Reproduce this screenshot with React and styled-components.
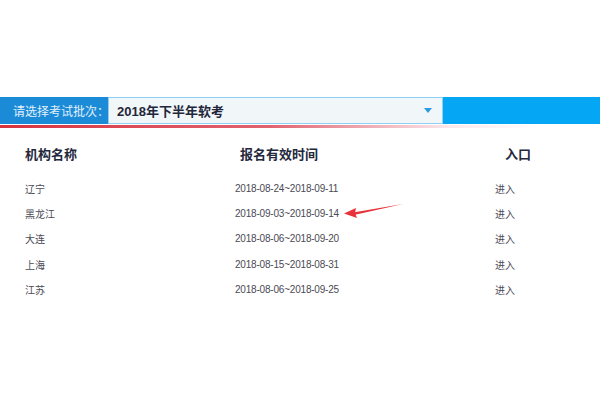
import React from 'react';
import styled, { createGlobalStyle } from 'styled-components';

const GlobalStyle = createGlobalStyle`
	html, body {
		margin: 0;
		padding: 0;
		background: #fff;
	}
	body {
		font-family: "Liberation Sans", "Noto Sans CJK SC", sans-serif;
	}
`;

const rows = [
	{ name: '辽宁', time: '2018-08-24~2018-09-11' },
	{ name: '黑龙江', time: '2018-09-03~2018-09-14', marked: true },
	{ name: '大连', time: '2018-08-06~2018-09-20' },
	{ name: '上海', time: '2018-08-15~2018-08-31' },
	{ name: '江苏', time: '2018-08-06~2018-09-25' },
];

export const App = () => (
	<Page>
		<GlobalStyle />
		<BarWrap>
			<Bar>
				<Label>请选择考试批次：</Label>
				<Select>
					<SelectText>2018年下半年软考</SelectText>
					<Caret viewBox="0 0 8 5">
						<path d="M0 0 L8 0 L4 5 Z" fill="#2d9be2" />
					</Caret>
				</Select>
				<BarFill />
			</Bar>
			<RedLine />
		</BarWrap>
		<Table>
			<Head $indent={0}>机构名称</Head>
			<Head $indent={5}>报名有效时间</Head>
			<Head $indent={10}>入口</Head>
			{rows.map(r => (
				<React.Fragment key={r.name}>
					<Cell>{r.name}</Cell>
					<Cell $date>
						{r.time}
						{r.marked && (
							<Arrow viewBox="0 0 62 16">
								<path d="M60 1 L10 9.5 L11 12 Z" fill="#e8323a" />
								<path d="M1 10.5 L13 5 L12 10 L14 15 Z" fill="#e8323a" />
							</Arrow>
						)}
					</Cell>
					<Cell>进入</Cell>
				</React.Fragment>
			))}
		</Table>
	</Page>
);

export default App;

const Page = styled.div`
	width: 600px;
	height: 400px;
	padding-top: 97px;
	box-sizing: border-box;
	overflow: hidden;
`;

const BarWrap = styled.div`
	display: flex;
	flex-direction: column;
`;

const Bar = styled.div`
	display: flex;
	align-items: stretch;
	height: 27px;
	background: #1b8bd7;
`;

const Label = styled.div`
	display: flex;
	align-items: center;
	width: 108px;
	padding-left: 13px;
	box-sizing: border-box;
	color: #e2f0fb;
	font-size: 12px;
	white-space: nowrap;
`;

const Select = styled.div`
	display: flex;
	align-items: center;
	justify-content: space-between;
	width: 335px;
	padding: 0 10px 0 8px;
	box-sizing: border-box;
	background: #f1f6f9;
	border: 1px solid #8fd0f2;
`;

const SelectText = styled.span`
	font-size: 13px;
	font-weight: bold;
	color: #23263a;
`;

const Caret = styled.svg`
	width: 8px;
	height: 5px;
`;

const BarFill = styled.div`
	flex: 1;
	background: #05a6f3;
`;

const RedLine = styled.div`
	height: 3px;
	margin-top: 1px;
	background: linear-gradient(to right, #d8343f 0%, #e06470 45%, rgba(240, 180, 190, 0.3) 75%, rgba(255, 255, 255, 0) 90%);
`;

const Table = styled.div`
	display: grid;
	grid-template-columns: 210px 260px 1fr;
	grid-template-rows: 45px;
	grid-auto-rows: 25.2px;
	padding: 3px 0 0 25px;
	align-items: center;
`;

const Head = styled.div`
	padding-left: ${p => p.$indent}px;
	font-size: 13px;
	font-weight: bold;
	color: #24283c;
	white-space: nowrap;
`;

const Cell = styled.div`
	position: relative;
	font-size: 10px;
	letter-spacing: ${p => (p.$date ? '-0.2px' : '0')};
	color: #4a4a55;
	white-space: nowrap;
`;

const Arrow = styled.svg`
	position: absolute;
	left: 108px;
	top: -5px;
	width: 62px;
	height: 16px;
`;
